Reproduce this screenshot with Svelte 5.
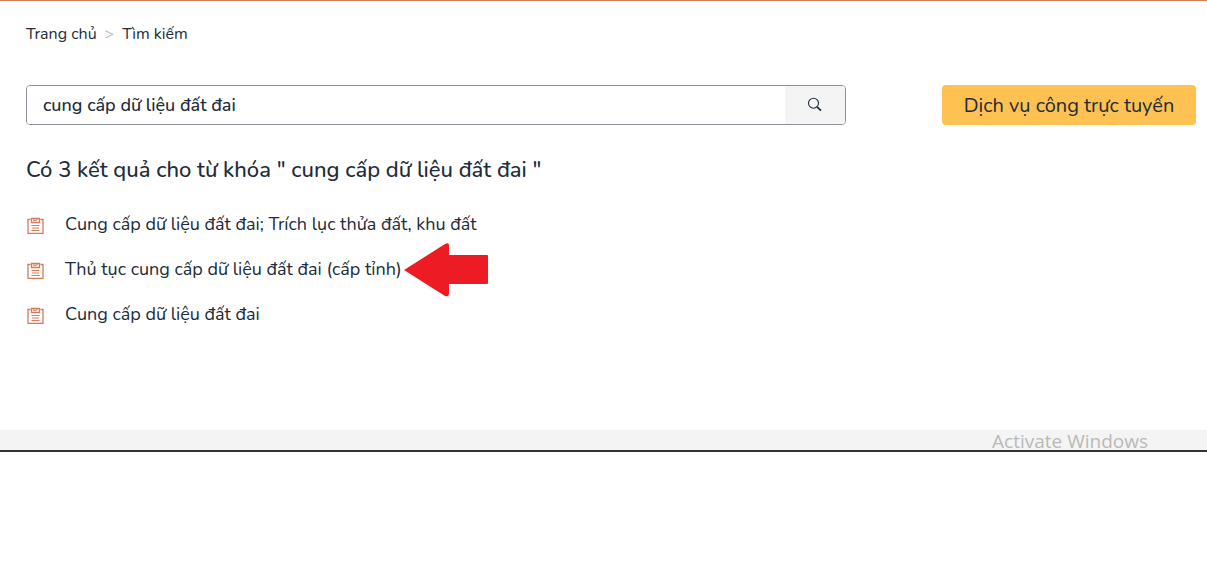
<script>
  let query = $state('cung cấp dữ liệu đất đai');
  const submitted = 'cung cấp dữ liệu đất đai';
  const results = [
    { title: 'Cung cấp dữ liệu đất đai; Trích lục thửa đất, khu đất' },
    { title: 'Thủ tục cung cấp dữ liệu đất đai (cấp tỉnh)', marked: true },
    { title: 'Cung cấp dữ liệu đất đai' }
  ];
</script>

<main>
  <nav aria-label="Breadcrumb">
    <a href="#home">Trang chủ</a>
    <span class="sep">&gt;</span>
    <a href="#search">Tìm kiếm</a>
  </nav>

  <div class="tools">
    <form class="search" onsubmit={(e) => e.preventDefault()}>
      <input type="text" aria-label="Tìm kiếm" bind:value={query} />
      <button type="submit" aria-label="Tìm kiếm">
        <svg width="16" height="16" viewBox="0 0 16 16" fill="none" stroke="#212b3b">
          <circle cx="6.5" cy="6.2" r="5" stroke-width="1.1" />
          <path d="M10 9.8L14 13.6" stroke-width="1.8" />
        </svg>
      </button>
    </form>
    <a class="service" href="#services">Dịch vụ công trực tuyến</a>
  </div>

  <h1>Có {results.length} kết quả cho từ khóa " {submitted} "</h1>

  <ul>
    {#each results as item}
      <li>
        <svg class="doc" width="19" height="18" viewBox="0 0 19 18" fill="none" stroke="#d47c5a">
          <path d="M4.5 2.5H2V16.4H17V2.5H14.5" stroke-width="1.3" />
          <path d="M5.5 1.5H13.5V5.5H5.5Z" stroke-width="1.3" />
          <path d="M7.8 1.5V3.7H9.5L9.5 3H11.2V1.5" stroke-width="1" />
          <path d="M5.5 8.5H13.5M5.5 13.5H13.5" stroke-width="1.2" />
          <path d="M6 11H13" stroke-width="1" />
        </svg>
        <a href="#result">{item.title}</a>
        {#if item.marked}
          <svg class="arrow" width="84" height="54" viewBox="0 0 84 54" fill="#ed1c24" aria-hidden="true">
            <path d="M0 27L41 1Q45 -1 45 2V12H83Q84 12 84 13V40Q84 41 83 41H45V51Q45 54 41 53Z" />
          </svg>
        {/if}
      </li>
    {/each}
  </ul>
</main>

<footer><span>Activate Windows</span></footer>

<style>
  :global(body) {
    margin: 0;
    background: #fff;
  }
  main {
    box-sizing: border-box;
    min-height: 430px;
    padding: 21px 11px 0 26px;
    border-top: 1px solid #d47c5a;
    font-family: Nunito, 'Open Sans', 'Noto Sans', sans-serif;
    color: #212b3b;
  }
  a {
    color: inherit;
    text-decoration: none;
  }
  nav {
    display: flex;
    gap: 8px;
    font-size: 16px;
    line-height: 24px;
  }
  .sep {
    color: #b9bcc0;
  }
  .tools {
    display: grid;
    grid-template-columns: 1fr 254px;
    gap: 96px;
    margin-top: 39px;
  }
  .search {
    display: flex;
    box-sizing: border-box;
    height: 40px;
    border: 1px solid #8a8f98;
    border-radius: 4px;
    overflow: hidden;
  }
  input {
    flex: 1;
    min-width: 0;
    padding: 0 16px;
    border: 0;
    outline: 0;
    background: #fff;
    color: inherit;
    font: 500 18px 'Nunito', 'Open Sans', 'Noto Sans', sans-serif;
  }
  button {
    display: flex;
    align-items: center;
    justify-content: center;
    width: 60px;
    padding: 0;
    border: 0;
    background: #f4f4f4;
  }
  .service {
    box-sizing: border-box;
    height: 40px;
    padding-top: 1px;
    border-radius: 4px;
    background: #ffc151;
    font-size: 20px;
    line-height: 40px;
    text-align: center;
    white-space: nowrap;
  }
  h1 {
    margin: 29px 0 0;
    font-size: 22px;
    font-weight: 500;
    line-height: 32px;
  }
  ul {
    margin: 15px 0 0;
    padding: 0;
    list-style: none;
  }
  li {
    position: relative;
    display: flex;
    align-items: center;
    gap: 20px;
    height: 45px;
    font-size: 18px;
  }
  .doc {
    margin-top: 4px;
  }
  .arrow {
    position: absolute;
    left: 378px;
    top: -3px;
  }
  footer {
    display: flex;
    justify-content: flex-end;
    padding-right: 59px;
    border-bottom: 2px solid #333338;
    background: #f4f4f4;
    color: #b9b9b9;
    font: 19px/22px 'Open Sans', sans-serif;
    height: 20px;
  }
</style>
